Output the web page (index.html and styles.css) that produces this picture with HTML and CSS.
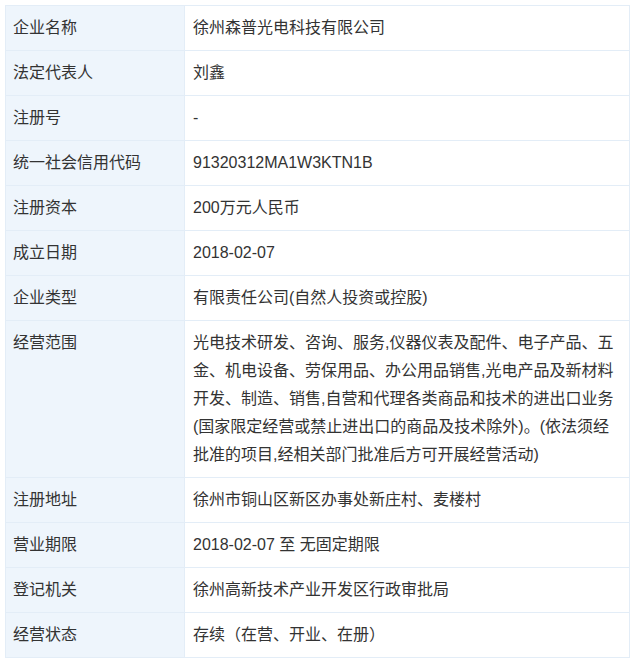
FILE: index.html
```html
<!DOCTYPE html>
<html lang="zh-CN">
<head>
<meta charset="utf-8">
<title>企业信息</title>
<link rel="stylesheet" href="styles.css">
</head>
<body>
<div class="info">
  <div class="label">企业名称</div><div class="value">徐州森普光电科技有限公司</div>
  <div class="label">法定代表人</div><div class="value">刘鑫</div>
  <div class="label">注册号</div><div class="value">-</div>
  <div class="label">统一社会信用代码</div><div class="value">91320312MA1W3KTN1B</div>
  <div class="label">注册资本</div><div class="value">200万元人民币</div>
  <div class="label">成立日期</div><div class="value">2018-02-07</div>
  <div class="label">企业类型</div><div class="value">有限责任公司(自然人投资或控股)</div>
  <div class="label">经营范围</div><div class="value">光电技术研发、咨询、服务,仪器仪表及配件、电子产品、五金、机电设备、劳保用品、办公用品销售,光电产品及新材料开发、制造、销售,自营和代理各类商品和技术的进出口业务(国家限定经营或禁止进出口的商品及技术除外)。(依法须经批准的项目,经相关部门批准后方可开展经营活动)</div>
  <div class="label">注册地址</div><div class="value">徐州市铜山区新区办事处新庄村、麦楼村</div>
  <div class="label">营业期限</div><div class="value">2018-02-07 至 无固定期限</div>
  <div class="label">登记机关</div><div class="value">徐州高新技术产业开发区行政审批局</div>
  <div class="label">经营状态</div><div class="value">存续（在营、开业、在册）</div>
</div>
</body>
</html>
```
FILE: styles.css
```css
html, body {
  margin: 0;
  padding: 0;
  background: #ffffff;
}
body {
  padding: 5px;
  font-family: "Liberation Sans", Arial, "Noto Sans CJK SC", sans-serif;
  font-size: 16px;
  color: #333333;
}
.info {
  display: grid;
  grid-template-columns: 179px 445px;
  width: 625px;
  box-sizing: border-box;
  border-top: 1px solid #e3edf7;
  border-left: 1px solid #e3edf7;
}
.label, .value {
  box-sizing: border-box;
  line-height: 28px;
  padding: 8px 8px 8px 8px;
  border-right: 1px solid #e3edf7;
  border-bottom: 1px solid #e3edf7;
}
.label {
  background: #eef5fc;
  padding-left: 7px;
}
.value {
  background: #ffffff;
}
```
